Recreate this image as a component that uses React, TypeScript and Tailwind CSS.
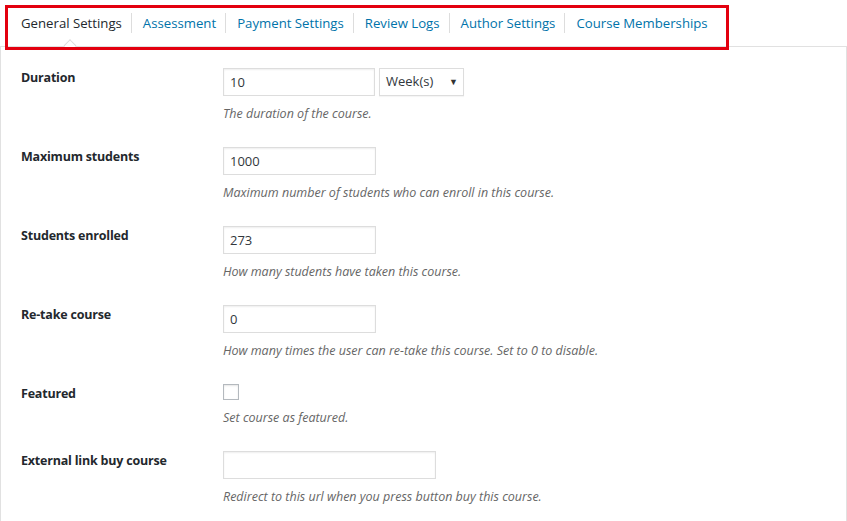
const tabs = [
  "General Settings",
  "Assessment",
  "Payment Settings",
  "Review Logs",
  "Author Settings",
  "Course Memberships",
];

type Row = {
  label: string;
  desc: string;
  field: "duration" | "text" | "check" | "wide";
  value?: string;
};

const rows: Row[] = [
  { label: "Duration", desc: "The duration of the course.", field: "duration", value: "10" },
  { label: "Maximum students", desc: "Maximum number of students who can enroll in this course.", field: "text", value: "1000" },
  { label: "Students enrolled", desc: "How many students have taken this course.", field: "text", value: "273" },
  { label: "Re-take course", desc: "How many times the user can re-take this course. Set to 0 to disable.", field: "text", value: "0" },
  { label: "Featured", desc: "Set course as featured.", field: "check" },
  { label: "External link buy course", desc: "Redirect to this url when you press button buy this course.", field: "wide", value: "" },
];

const inputCls =
  "h-[28px] border border-[#ddd] bg-white px-[6px] text-[13px] text-[#32373c] shadow-[inset_0_1px_2px_rgba(0,0,0,0.07)] outline-none";

function Field({ row }: { row: Row }) {
  if (row.field === "check") {
    return <div className="h-[16px] w-[16px] border border-[#b4b9be] bg-white shadow-[inset_0_1px_2px_rgba(0,0,0,0.1)]" />;
  }
  if (row.field === "duration") {
    return (
      <div className="flex gap-[4px]">
        <input className={`${inputCls} w-[152px]`} defaultValue={row.value} />
        <div className="flex h-[28px] w-[85px] items-center justify-between border border-[#ddd] bg-white pl-[6px] pr-[5px] text-[13px] text-[#32373c] shadow-[0_1px_1px_rgba(0,0,0,0.04)]">
          <span>Week(s)</span>
          <span className="text-[9px] text-[#333]">▼</span>
        </div>
      </div>
    );
  }
  return (
    <input
      className={`${inputCls} ${row.field === "wide" ? "w-[213px]" : "w-[153px]"}`}
      defaultValue={row.value}
    />
  );
}

export default function App() {
  return (
    <div className="relative h-[521px] w-[847px] overflow-hidden bg-white font-['Open_Sans',sans-serif]">
      <div className="flex h-[47px] items-center border-b border-[#e1e1e1] pl-[10px]">
        {tabs.map((t, i) => (
          <div key={t} className="flex items-center">
            {i > 0 && <span className="h-[20px] w-px bg-[#ddd]" />}
            <div
              className={`relative pl-[11px] pr-[9px] text-[13.2px] leading-[18px] ${
                i === 0 ? "text-[#23282d]" : "text-[#0073aa]"
              }`}
            >
              {t}
              {i === 0 && (
                <span className="absolute left-1/2 top-[27px] h-[9px] w-[9px] -translate-x-1/2 rotate-45 border-l border-t border-[#ddd] bg-white" />
              )}
            </div>
          </div>
        ))}
      </div>

      <div className="flex h-[474px] flex-col gap-[24px] border-l border-r border-[#e1e1e1] pt-[21px]">
        {rows.map((r) => (
          <div key={r.label} className="flex">
            <div className="w-[222px] pl-[20px] pt-[1px] text-[12.5px] font-bold leading-[18px] tracking-[-0.2px] text-[#23282d]">
              {r.label}
            </div>
            <div className="flex flex-col">
              <Field row={r} />
              <p className="mt-[9px] text-[12.5px] italic leading-[18px] text-[#666]">{r.desc}</p>
            </div>
          </div>
        ))}
      </div>

      <div className="pointer-events-none absolute left-[5px] top-[5px] h-[45px] w-[724px] border-[3px] border-[#e3000f]" />
    </div>
  );
}
